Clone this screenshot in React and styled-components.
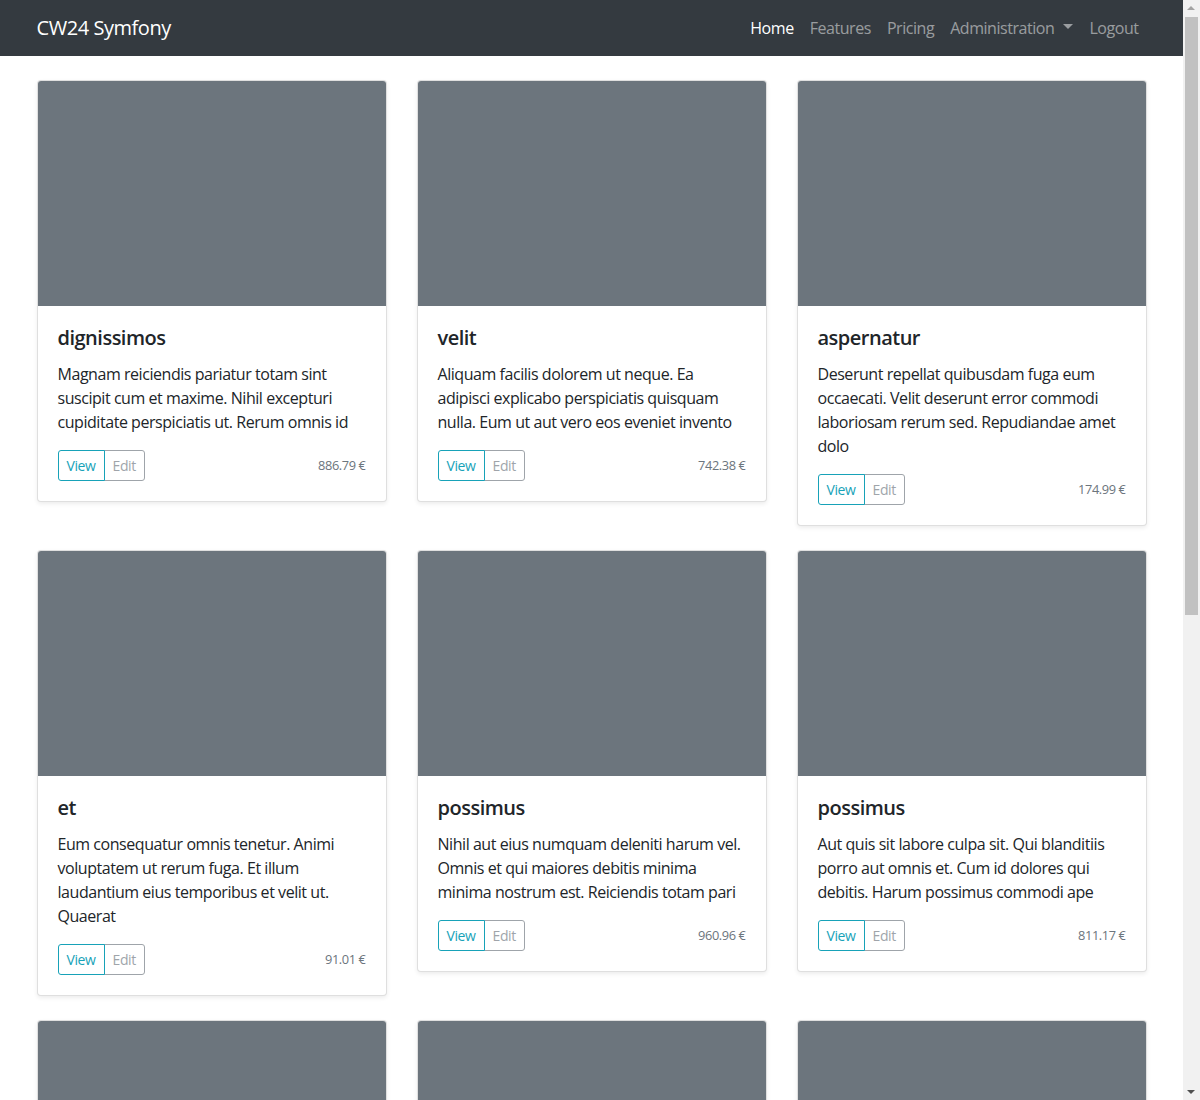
import React from "react";
import styled, { createGlobalStyle } from "styled-components";

const Global = createGlobalStyle`
  html, body { margin: 0; padding: 0; }
  body {
    font-family: "Open Sans", "Noto Sans", sans-serif;
    font-size: 16px;
    line-height: 1.5;
    letter-spacing: -0.45px;
    color: #212529;
    background: #fff;
  }
  * { box-sizing: border-box; }
`;

const Page = styled.div`
  margin-right: 17px;
`;

const ScrollTrack = styled.div`
  position: fixed;
  top: 0;
  right: 0;
  width: 17px;
  height: 100vh;
  background: #f1f1f1;
  z-index: 10;
`;

const ScrollThumb = styled.div`
  position: absolute;
  left: 2px;
  right: 2px;
  top: 17px;
  height: 598px;
  background: #c1c1c1;
`;

const ScrollArrow = styled.div`
  position: absolute;
  left: 4px;
  ${(p) => (p.$down ? "bottom: 6px;" : "top: 6px;")}
  width: 0;
  height: 0;
  border-left: 4px solid transparent;
  border-right: 4px solid transparent;
  ${(p) => (p.$down ? "border-top: 4px solid #505050;" : "border-bottom: 4px solid #a3a3a3;")}
`;

const Navbar = styled.nav`
  background: #343a40;
  height: 56px;
  display: flex;
  align-items: center;
`;

const Container = styled.div`
  width: 1140px;
  max-width: 100%;
  margin: 0 auto;
  padding: 0 15px;
`;

const NavInner = styled(Container)`
  display: flex;
  align-items: center;
  justify-content: space-between;
`;

const Brand = styled.a`
  color: #fff;
  font-size: 20px;
  line-height: 30px;
  text-decoration: none;
`;

const NavList = styled.ul`
  display: flex;
  list-style: none;
  margin: 0;
  padding: 0;
`;

const NavLink = styled.a`
  display: flex;
  align-items: center;
  padding: 8px;
  color: ${(p) => (p.$active ? "#fff" : "rgba(255,255,255,.5)")};
  text-decoration: none;
  font-size: 16px;
  line-height: 24px;
`;

const Caret = styled.span`
  display: inline-block;
  margin-left: 9px;
  border-top: 5px solid currentColor;
  border-left: 5px solid transparent;
  border-right: 5px solid transparent;
  transform: translateY(-2px);
`;

const Main = styled.main`
  padding-top: 24px;
`;

const Grid = styled.div`
  display: grid;
  grid-template-columns: repeat(3, 1fr);
  column-gap: 30px;
  row-gap: 24px;
  align-items: start;
`;

const Card = styled.div`
  border: 1px solid rgba(0, 0, 0, 0.125);
  border-radius: 4px;
  box-shadow: 0 2px 4px rgba(0, 0, 0, 0.075);
  overflow: hidden;
  background: #fff;
`;

const Thumb = styled.div`
  height: 225px;
  background: #6c757d;
`;

const Body = styled.div`
  padding: 20px;
`;

const Title = styled.h5`
  margin: 0 0 12px;
  font-size: 20px;
  font-weight: 600;
  line-height: 24px;
  letter-spacing: -0.5px;
`;

const Text = styled.p`
  margin: 0 0 16px;
`;

const Footer = styled.div`
  display: flex;
  align-items: center;
  justify-content: space-between;
`;

const BtnGroup = styled.div`
  display: inline-flex;
`;

const Btn = styled.button`
  font-family: inherit;
  font-size: 14px;
  letter-spacing: -0.4px;
  line-height: 21px;
  padding: 4px 8px;
  background: transparent;
  border: 1px solid ${(p) => p.$color};
  color: ${(p) => p.$color};
  opacity: ${(p) => (p.disabled ? 0.65 : 1)};
  border-radius: ${(p) => (p.$first ? "3px 0 0 3px" : "0 3px 3px 0")};
  margin-left: ${(p) => (p.$first ? "0" : "-1px")};
  position: relative;
  z-index: ${(p) => (p.$first ? 1 : 0)};
`;

const Price = styled.small`
  font-size: 12.8px;
  letter-spacing: -0.4px;
  color: #6c757d;
`;

const items = [
  { t: "dignissimos", d: "Magnam reiciendis pariatur totam sint suscipit cum et maxime. Nihil excepturi cupiditate perspiciatis ut. Rerum omnis id", p: "886.79" },
  { t: "velit", d: "Aliquam facilis dolorem ut neque. Ea adipisci explicabo perspiciatis quisquam nulla. Eum ut aut vero eos eveniet invento", p: "742.38" },
  { t: "aspernatur", d: "Deserunt repellat quibusdam fuga eum occaecati. Velit deserunt error commodi laboriosam rerum sed. Repudiandae amet dolo", p: "174.99" },
  { t: "et", d: "Eum consequatur omnis tenetur. Animi voluptatem ut rerum fuga. Et illum laudantium eius temporibus et velit ut. Quaerat", p: "91.01" },
  { t: "possimus", d: "Nihil aut eius numquam deleniti harum vel. Omnis et qui maiores debitis minima minima nostrum est. Reiciendis totam pari", p: "960.96" },
  { t: "possimus", d: "Aut quis sit labore culpa sit. Qui blanditiis porro aut omnis et. Cum id dolores qui debitis. Harum possimus commodi ape", p: "811.17" },
  { t: "quia", d: "Voluptas rerum sint omnis. Dolorem quia et sed. Cupiditate eum odit nam assumenda aut. Magni dicta qui eos architecto", p: "512.40" },
  { t: "minus", d: "Et ut voluptatem repellendus in. Ut accusamus et aut quae iusto. Ratione est ullam aliquid rem nisi. Sit quia eius nobis", p: "333.12" },
  { t: "dolores", d: "Quo dolorem iure ipsam. Architecto sunt eveniet qui dolores. Labore voluptatibus ut est ut. Consequuntur et neque qui", p: "68.55" },
];

export default function App() {
  return (
    <>
      <Global />
      <ScrollTrack>
        <ScrollArrow />
        <ScrollThumb />
        <ScrollArrow $down />
      </ScrollTrack>
      <Page>
        <Navbar>
          <NavInner>
            <Brand href="#">CW24 Symfony</Brand>
            <NavList>
              <li><NavLink href="#" $active>Home</NavLink></li>
              <li><NavLink href="#">Features</NavLink></li>
              <li><NavLink href="#">Pricing</NavLink></li>
              <li><NavLink href="#">Administration<Caret /></NavLink></li>
              <li><NavLink href="#">Logout</NavLink></li>
            </NavList>
          </NavInner>
        </Navbar>
        <Main>
          <Container>
            <Grid>
              {items.map((it, i) => (
                <Card key={i}>
                  <Thumb />
                  <Body>
                    <Title>{it.t}</Title>
                    <Text>{it.d}</Text>
                    <Footer>
                      <BtnGroup>
                        <Btn $first $color="#17a2b8">View</Btn>
                        <Btn $color="#6c757d" disabled>Edit</Btn>
                      </BtnGroup>
                      <Price>{it.p} €</Price>
                    </Footer>
                  </Body>
                </Card>
              ))}
            </Grid>
          </Container>
        </Main>
      </Page>
    </>
  );
}
